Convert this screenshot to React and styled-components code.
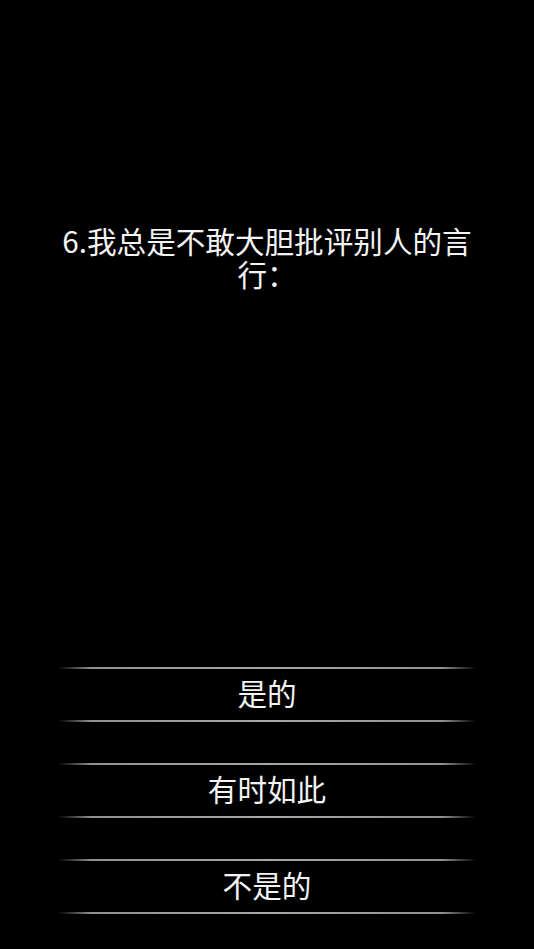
import React from 'react';
import styled, { createGlobalStyle } from 'styled-components';

const GlobalStyle = createGlobalStyle`
  html, body {
    margin: 0;
    padding: 0;
    background: #000;
  }
  body {
    font-family: "Noto Sans CJK SC", "Noto Sans", sans-serif;
  }
`;

const options = ['是的', '有时如此', '不是的'];

const App = () => {
  return (
    <Page>
      <GlobalStyle />
      <Question>6.我总是不敢大胆批评别人的言行：</Question>
      <OptionList>
        {options.map((text) => (
          <Option key={text}>{text}</Option>
        ))}
      </OptionList>
    </Page>
  );
};

const Page = styled.div`
  height: 949px;
  box-sizing: border-box;
  display: flex;
  flex-direction: column;
  align-items: center;
  padding: 224px 0 35px;
  background: #000;
  color: #f4f4f4;
`;

const Question = styled.div`
  width: 418px;
  font-size: 29.6px;
  line-height: 33px;
  text-align: center;
`;

const OptionList = styled.div`
  margin-top: auto;
  width: 418px;
  display: flex;
  flex-direction: column;
  gap: 41px;
`;

const Option = styled.div`
  position: relative;
  height: 55px;
  box-sizing: border-box;
  padding-bottom: 5px;
  display: flex;
  align-items: center;
  justify-content: center;
  font-size: 29.6px;
  color: #f4f4f4;
  cursor: pointer;

  &::before,
  &::after {
    content: '';
    position: absolute;
    left: 0;
    right: 0;
    height: 2px;
    background: linear-gradient(
      to right,
      rgba(160, 160, 160, 0) 0%,
      rgba(160, 160, 160, 0.9) 8%,
      #a8a8a8 50%,
      rgba(160, 160, 160, 0.9) 92%,
      rgba(160, 160, 160, 0) 100%
    );
  }

  &::before {
    top: 0;
  }

  &::after {
    bottom: 0;
  }
`;

export default App;
